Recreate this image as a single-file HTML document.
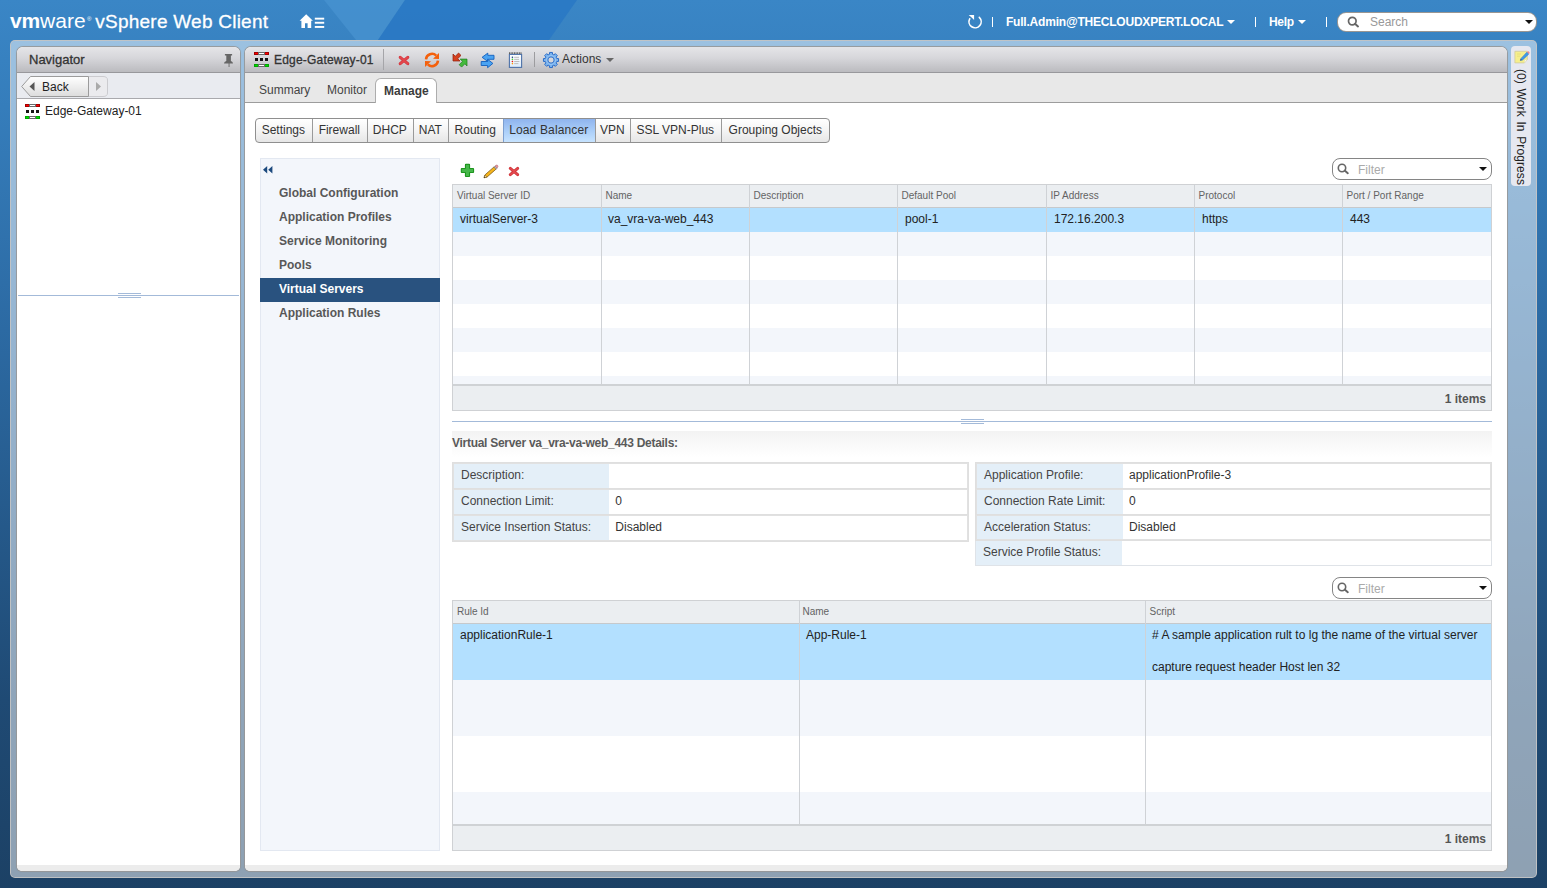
<!DOCTYPE html>
<html lang="en">
<head>
<meta charset="utf-8">
<title>vSphere Web Client</title>
<style>
*{box-sizing:border-box;margin:0;padding:0}
html,body{width:1547px;height:888px;overflow:hidden}
body{position:relative;font-family:"Liberation Sans",Arial,sans-serif;font-size:12px;color:#222;
 background:linear-gradient(180deg,#3a86c6 0px,#3781c0 60px,#2c6aa3 330px,#1f4a74 700px,#1c4165 888px)}
.abs{position:absolute}
.t{position:absolute;white-space:nowrap;line-height:14px}
/* top bar */
#topdeco{left:0;top:0;width:1547px;height:40px}
#brand{left:10px;top:8px;color:#fff;font-size:19px;line-height:26px;height:26px}
#brand .vm{font-size:21px;letter-spacing:.1px}
#brand .vm b{letter-spacing:-.2px}
#brand .reg{font-size:6px;position:relative;top:-7px;margin-left:1px}
#brand .vs{margin-left:4px;letter-spacing:.24px;-webkit-text-stroke:.3px #fff}
.hdrtxt{color:#fff;font-size:12px;font-weight:bold}
/* container */
#wrap{left:10px;top:40px;width:1527px;height:838px;border-radius:5px;background:rgba(255,255,255,.5);border:1px solid rgba(196,196,196,.9)}
.panel{position:absolute;background:#fff;border-radius:6px 6px 5px 5px;overflow:hidden;box-shadow:0 0 0 1px rgba(150,150,150,.85),0 0 2px rgba(90,90,90,.25)}
.phead{position:absolute;left:0;top:0;right:0;height:26px;background:linear-gradient(180deg,#e5e5e8 0%,#d6d6da 45%,#bbbbbf 100%);border-bottom:1px solid #98989c}
.pfoot{position:absolute;left:0;bottom:0;right:0;height:6px;background:#ececec}

/* header right */
.sep{position:absolute;top:17px;width:1px;height:10px;background:#fff}
#search{left:1337px;top:12px;width:200px;height:20px;background:#fff;border:1px solid rgba(120,115,110,.75);border-radius:9px}
.ph{color:#999;font-size:12px}
.caret{position:absolute;width:0;height:0;border-left:4px solid transparent;border-right:4px solid transparent;border-top:4px solid #fff}
/* nav */
#backrow{position:absolute;left:0;top:26px;right:0;height:26px;background:#e9ebf0;border-bottom:1px solid #a9a9ad}

/* main header */
.ttl{font-size:12px;color:#333;-webkit-text-stroke:.3px #333;letter-spacing:.2px}
.vsep{position:absolute;width:1px;background:#a5a5a9}
#tabrow{position:absolute;left:245px;top:73px;width:1262px;height:30px;background:#e8e8e8;border-bottom:1px solid #9c9c9c}
#tabsel{position:absolute;left:375px;top:78px;width:62px;height:25px;background:#fff;border:1px solid #adadad;border-bottom:none;border-radius:6px 6px 0 0}
/* subtabs */
#subtabs{position:absolute;left:255px;top:118px;height:25px;width:575px;border:1px solid #8f8f8f;border-radius:4px;background:linear-gradient(180deg,#fff 0%,#f4f4f4 50%,#e6e6e6 100%);overflow:hidden}
#subtabs div{position:absolute;top:0;height:23px;border-left:1px solid #9a9a9a;line-height:23px;text-align:center;text-indent:-1.4px;color:#333;font-size:12px;white-space:nowrap}
#subtabs div.sel{background:linear-gradient(180deg,#8fb4ee 0%,#a9cdf8 50%,#c6e3ff 100%);border-left:1px solid #7d9fd0;border-right:1px solid #7d9fd0}
/* sidebar */
#side{position:absolute;left:260px;top:158px;width:180px;height:693px;background:#f3f6fb;border:1px solid #e3e8f1}
.sitem{position:absolute;left:279px;font-weight:bold;font-size:12px;color:#585858;line-height:14px;white-space:nowrap}

/* grids */
.grid{position:absolute;left:452px;width:1040px;border:1px solid #cfd1d4;background:#fff;overflow:hidden}
.ghead{position:absolute;left:0;top:0;right:0;height:23px;background:#ebeef1;border-bottom:1px solid #c6c9cc}
.gh{position:absolute;top:5px;font-size:10px;line-height:12px;color:#636363;white-space:nowrap}
.grow{position:absolute;left:0;right:0;margin-top:-1px}
.gsel{background:#b3e0ff}
.galt{background:#f3f6fb}
.gcol{position:absolute;top:0;width:1px;background:#cfd2d6}
.gcolh{position:absolute;top:0;width:1px;height:23px;background:#c6c9cc}
.gfoot{position:absolute;left:0;right:0;bottom:0;height:26px;background:#ebeef1;border-top:2px solid #cfd2d5}
.gfoot span{position:absolute;right:5px;top:6px;font-weight:bold;color:#555;font-size:12px;line-height:14px}
.gc{position:absolute;margin-top:-1px;font-size:12px;line-height:14px;color:#222;white-space:nowrap}
.filter{position:absolute;left:1332px;width:160px;height:22px;background:#fff;border:1px solid #858585;border-radius:8px}
/* details */
#dtitlebg{position:absolute;left:452px;top:431px;width:1040px;height:26px;background:linear-gradient(180deg,#f3f3f3,#fff)}
.dtab{position:absolute;background:#fff;border:1px solid #d6d6d6}
.drow{position:absolute;left:0;right:0;height:27px;border:1px solid #dfdfdf;box-shadow:inset 0 0 0 1px #e1e1e1}
.dlab{position:absolute;left:1px;top:1px;bottom:1px;background:#e4eff8}
.dl,.dv{position:absolute;top:5px;font-size:12px;line-height:14px;color:#444;white-space:nowrap}
.dv{color:#333}
/* wip */
#wip{position:absolute;left:1511px;top:46px;width:20px;height:140px;background:#e6e8f0;border-radius:4px}
#wiptxt{position:absolute;left:1521px;top:69px;width:0;height:0}
#wiptxt span{position:absolute;left:0;top:0;transform-origin:0 0;transform:rotate(90deg) translate(0,-7px);white-space:nowrap;font-size:12px;line-height:14px;color:#222;letter-spacing:.1px;word-spacing:1.2px}
</style>
</head>
<body>
<svg id="topdeco" class="abs" viewBox="0 0 1547 40" preserveAspectRatio="none">
 <polygon points="324,0 405,0 378,40 356,40" fill="#4893d0" opacity=".75"/>
 <polygon points="405,0 577,0 549,40 378,40" fill="#2877c4" opacity=".8"/>
 </svg>
<div id="brand" class="t"><span class="vm"><b>vm</b>ware</span><span class="reg">®</span><span class="vs">vSphere Web Client</span></div>


<!-- home icon -->
<svg class="abs" style="left:299px;top:13px" width="27" height="16" viewBox="0 0 27 16">
 <path d="M7.2 1.2 L0.6 7.8 L2.4 7.8 L2.4 15 L6 15 L6 10.2 L8.6 10.2 L8.6 15 L12.2 15 L12.2 7.8 L13.9 7.8 Z" fill="#fff"/>
 <rect x="15.8" y="4.7" width="9.4" height="1.9" fill="#fff"/><rect x="15.8" y="8.8" width="9.4" height="1.9" fill="#fff"/><rect x="15.8" y="13" width="9.4" height="1.9" fill="#fff"/>
</svg>
<!-- refresh -->
<svg class="abs" style="left:967px;top:13px" width="17" height="17" viewBox="0 0 17 17">
 <path d="M12.3 4.3 A6.1 6.1 0 1 1 2.7 5.8" fill="none" stroke="#fff" stroke-width="1.6" stroke-linecap="round"/>
 <path d="M1.7 2 L7.1 2 L7.1 7 L4.6 4.6 Z" fill="#fff"/>
</svg>
<div class="sep" style="left:992px"></div>
<div class="t hdrtxt" style="left:1006px;top:15px;letter-spacing:-.21px">Full.Admin@THECLOUDXPERT.LOCAL</div>
<div class="caret" style="left:1227px;top:20px"></div>
<div class="sep" style="left:1255px"></div>
<div class="t hdrtxt" style="left:1269px;top:15px;letter-spacing:-.3px">Help</div>
<div class="caret" style="left:1298px;top:20px"></div>
<div class="sep" style="left:1326px"></div>
<div id="search" class="abs">
 <svg class="abs" style="left:9px;top:3px" width="13" height="13" viewBox="0 0 13 13"><circle cx="5.3" cy="5.1" r="3.8" fill="none" stroke="#666" stroke-width="1.7"/><path d="M8 7.8 L11 10.4" stroke="#666" stroke-width="2" stroke-linecap="round"/></svg>
 <div class="t ph" style="left:32px;top:2px">Search</div>
 <div class="caret" style="left:187px;top:7px;border-top-color:#111"></div>
</div>

<div id="wrap" class="abs"></div>

<!-- Navigator -->
<div class="panel" id="nav" style="left:17px;top:47px;width:223px;height:824px">
 <div class="phead"><div class="t" style="left:12px;top:6px;font-size:13px;color:#333;-webkit-text-stroke:.3px #333">Navigator</div>
  <svg class="abs" style="left:206px;top:6px" width="12" height="15" viewBox="0 0 12 15"><path d="M1.9 1 H9.1 V2.5 H7.9 V8 Q10 8.6 10 10.6 H6.5 V14 H5.6 V10.6 H1 Q1 8.6 3.3 8 V2.5 H1.9 Z" fill="#666"/></svg>
 </div>
 <div id="backrow">
  <svg class="abs" style="left:4px;top:3px" width="88" height="21" viewBox="0 0 88 21">
   <defs><linearGradient id="gb" x1="0" y1="0" x2="0" y2="1"><stop offset="0" stop-color="#fff"/><stop offset="1" stop-color="#dcdcdc"/></linearGradient></defs>
   <path d="M67.5 0.5 H82 Q86.5 0.5 86.5 4 V17 Q86.5 20.5 82 20.5 H67.5 Z" fill="#ebebee" stroke="#cbcbcf"/>
   <path d="M9.5 0.5 H67.5 V20.5 H9.5 L0.7 10.5 Z" fill="url(#gb)" stroke="#9b9b9b"/>
   <path d="M13.5 6 V15 L8.5 10.5 Z" fill="#555"/>
   <path d="M75 6 V15 L80 10.5 Z" fill="#aaa"/>
  </svg>
  <div class="t" style="left:25px;top:7px;font-size:12px;color:#222">Back</div>
 </div>
 <svg class="abs gwicon" style="left:8px;top:57px" width="15" height="15" viewBox="0 0 15 15">
  <rect x="0" y="0" width="15" height="3" fill="#a00000"/><rect x="1" y="1" width="13" height="1" fill="#ff0000"/><rect x="4" y="0" width="7" height="3" fill="#6a6a6a"/><rect x="5" y="1" width="5" height="1" fill="#fff"/>
  <rect x="1" y="6" width="3" height="3" fill="#151515"/><rect x="6" y="6" width="3" height="3" fill="#151515"/><rect x="11" y="6" width="3" height="3" fill="#151515"/>
  <rect x="0" y="12" width="15" height="3" fill="#00a400"/><rect x="1" y="13" width="13" height="1" fill="#00dd00"/><rect x="4" y="12" width="7" height="3" fill="#6a6a6a"/><rect x="5" y="13" width="5" height="1" fill="#fff"/>
 </svg>
 <div class="t" style="left:28px;top:57px">Edge-Gateway-01</div>
 <div class="abs" style="left:1px;top:248px;width:221px;height:1px;background:#a3bad9"></div>
 <div class="abs" style="left:101px;top:246px;width:23px;height:1px;background:#a3bad9"></div>
 <div class="abs" style="left:101px;top:250px;width:23px;height:1px;background:#a3bad9"></div>
 <div class="pfoot"></div>
</div>

<!-- Main -->
<div class="panel" id="main" style="left:245px;top:47px;width:1262px;height:824px">
 <div class="phead"></div>
 <div class="pfoot"></div>
</div>

<!-- main header content -->
<svg class="abs gwicon" style="left:254px;top:52px" width="15" height="15" viewBox="0 0 15 15">
  <rect x="0" y="0" width="15" height="3" fill="#a00000"/><rect x="1" y="1" width="13" height="1" fill="#ff0000"/><rect x="4" y="0" width="7" height="3" fill="#6a6a6a"/><rect x="5" y="1" width="5" height="1" fill="#fff"/>
  <rect x="1" y="6" width="3" height="3" fill="#151515"/><rect x="6" y="6" width="3" height="3" fill="#151515"/><rect x="11" y="6" width="3" height="3" fill="#151515"/>
  <rect x="0" y="12" width="15" height="3" fill="#00a400"/><rect x="1" y="13" width="13" height="1" fill="#00dd00"/><rect x="4" y="12" width="7" height="3" fill="#6a6a6a"/><rect x="5" y="13" width="5" height="1" fill="#fff"/>
 </svg>
<div class="t ttl" style="left:274px;top:53px">Edge-Gateway-01</div>
<div class="vsep" style="left:383px;top:49px;height:21px"></div>
<!-- red x -->
<svg class="abs" style="left:398px;top:55px" width="12" height="11" viewBox="0 0 12 11"><path d="M2.2 2.3 L9.8 8.7 M9.8 2.3 L2.2 8.7" stroke="#d2333b" stroke-width="3" stroke-linecap="round"/><path d="M2.2 2.3 L9.8 8.7 M9.8 2.3 L2.2 8.7" stroke="#e2474d" stroke-width="1.8" stroke-linecap="round"/></svg>
<!-- orange refresh -->
<svg class="abs" style="left:424px;top:52px" width="16" height="16" viewBox="0 0 16 16">
 <path d="M2 7.4 A6 6 0 0 1 12.2 3.6" fill="none" stroke="#f4600c" stroke-width="2.5"/>
 <path d="M15 .9 V7 L9 6.7 Z" fill="#f4600c"/>
 <path d="M14 8.6 A6 6 0 0 1 3.8 12.4" fill="none" stroke="#f4600c" stroke-width="2.5"/>
 <path d="M1 15.1 V9 L7 9.3 Z" fill="#f4600c"/>
</svg>
<!-- red/green arrows -->
<svg class="abs" style="left:452px;top:52px" width="16" height="16" viewBox="0 0 16 16">
 <path d="M1 2 L1 9 L8 9 L5.7 6.7 L9 3.4 L6.6 1 L3.3 4.3 Z" fill="#d6401f" stroke="#8e1e08" stroke-width=".7" stroke-linejoin="round"/>
 <path d="M15 7.1 L8.2 7.1 L10.5 9.4 L7.2 12.7 L9.6 15.1 L12.9 11.8 L15 14 Z" fill="#43ba3c" stroke="#1f7d1b" stroke-width=".7" stroke-linejoin="round"/>
</svg>
<!-- blue arrows -->
<svg class="abs" style="left:480px;top:52px" width="16" height="17" viewBox="0 0 16 17">
 <path d="M2.1 5.3 L7.8 1.1 V3.3 H14 V7.3 H7.8 V9.5 Z" fill="#4aa3f2" stroke="#1460bd" stroke-width=".9" stroke-linejoin="round"/>
 <path d="M12.9 11.4 L7.6 7.3 V9.5 H1.2 V13.5 H7.6 V15.7 Z" fill="#4aa3f2" stroke="#1460bd" stroke-width=".9" stroke-linejoin="round"/>
</svg>
<!-- notepad -->
<svg class="abs" style="left:508px;top:51px" width="15" height="18" viewBox="0 0 15 18">
 <defs><linearGradient id="np" x1="0" y1="0" x2="0" y2="1"><stop offset="0" stop-color="#fff"/><stop offset="1" stop-color="#dcebfa"/></linearGradient></defs>
 <rect x="1.4" y="3.4" width="12.2" height="13" fill="url(#np)" stroke="#4d72a8" stroke-width="1.1"/>
 <path d="M1 2.1 H14" stroke="#555" stroke-width="1.8" stroke-dasharray=".9 .75"/>
 <circle cx="4.4" cy="6.3" r=".8" fill="#1c3f7c"/><circle cx="4.4" cy="8.4" r=".8" fill="#5c3"/><circle cx="4.4" cy="10.5" r=".8" fill="#e11"/><circle cx="4.4" cy="12.6" r=".8" fill="#f90"/>
 <path d="M6.2 6.3 H11 M6.2 8.4 H11 M6.2 10.5 H11.4 M6.2 12.6 H10.4" stroke="#bdbdbd" stroke-width="1"/>
</svg>
<div class="vsep" style="left:534px;top:52px;height:15px;background:#9c9c9f"></div>
<!-- gear -->
<svg class="abs" style="left:542px;top:51px" width="18" height="18" viewBox="-9 -9 18 18">
 <path d="M-1.56 -5.69 L-1.44 -7.56 L1.44 -7.56 L1.56 -5.69 L2.92 -5.12 L4.33 -6.37 L6.37 -4.33 L5.12 -2.92 L5.69 -1.56 L7.56 -1.44 L7.56 1.44 L5.69 1.56 L5.12 2.92 L6.37 4.33 L4.33 6.37 L2.92 5.12 L1.56 5.69 L1.44 7.56 L-1.44 7.56 L-1.56 5.69 L-2.92 5.12 L-4.33 6.37 L-6.37 4.33 L-5.12 2.92 L-5.69 1.56 L-7.56 1.44 L-7.56 -1.44 L-5.69 -1.56 L-5.12 -2.92 L-6.37 -4.33 L-4.33 -6.37 L-2.92 -5.12 Z" fill="#7ab3ee" stroke="#2d6dc8" stroke-width="1" stroke-linejoin="round"/>
 <circle r="3.1" fill="#d6d6da" stroke="#2d6dc8" stroke-width=".9"/>
 <circle r="4.6" fill="none" stroke="#a9d0f8" stroke-width=".8" opacity=".7"/>
</svg>
<div class="t" style="left:562px;top:52px;font-size:12px;color:#333">Actions</div>
<div class="caret" style="left:606px;top:58px;border-top-color:#666"></div>

<!-- tab row -->
<div id="tabrow"></div>
<div id="tabsel"></div>
<div class="t" style="left:259px;top:83px;color:#444">Summary</div>
<div class="t" style="left:327px;top:83px;color:#444">Monitor</div>
<div class="t" style="left:384px;top:84px;color:#3c3c3c;font-weight:bold">Manage</div>

<!-- sub tabs -->
<div id="subtabs">
 <div style="left:-1px;width:57px">Settings</div>
 <div style="left:56px;width:55px">Firewall</div>
 <div style="left:111px;width:46px">DHCP</div>
 <div style="left:157px;width:35px">NAT</div>
 <div style="left:192px;width:55px">Routing</div>
 <div class="sel" style="left:247px;width:93px;letter-spacing:.15px">Load Balancer</div>
 <div style="left:339px;width:35px">VPN</div>
 <div style="left:374px;width:91px">SSL VPN-Plus</div>
 <div style="left:465px;width:109px">Grouping Objects</div>
</div>

<!-- sidebar -->
<div id="side"></div>
<svg class="abs" style="left:263px;top:166px" width="10" height="8" viewBox="0 0 10 8"><path d="M4.2 0 V7.4 L0 3.7 Z M9.4 0 V7.4 L5.2 3.7 Z" fill="#1c4a7e"/></svg>
<div class="sitem" style="top:186px">Global Configuration</div>
<div class="sitem" style="top:210px">Application Profiles</div>
<div class="sitem" style="top:234px">Service Monitoring</div>
<div class="sitem" style="top:258px">Pools</div>
<div class="abs" style="left:260px;top:278px;width:180px;height:24px;background:#29527f"></div>
<div class="sitem" style="top:282px;color:#fff">Virtual Servers</div>
<div class="sitem" style="top:306px">Application Rules</div>

<!-- toolbar icons -->
<svg class="abs" style="left:460px;top:163px" width="15" height="15" viewBox="0 0 15 15"><path d="M6 1.9 H9 V6 H13 V9 H9 V13 H6 V9 H1.9 V6 H6 Z" fill="#118c11" stroke="#118c11" stroke-width="2.2" stroke-linejoin="round"/><path d="M6 1.9 H9 V6 H13 V9 H9 V13 H6 V9 H1.9 V6 H6 Z" fill="#46b74a" stroke="#46b74a" stroke-width=".5" stroke-linejoin="round"/></svg>
<svg class="abs" style="left:483px;top:163px" width="16" height="16" viewBox="0 0 16 16">
 <path d="M1.05 14.7 L1.86 11.99 L11.01 3.93 L12.99 6.17 L3.84 14.23 Z" fill="#f6b51c" stroke="#7d5c18" stroke-width=".8" stroke-linejoin="round"/>
 <path d="M1.05 14.7 L1.86 11.99 L3.84 14.23 Z" fill="#fff3cf" stroke="#7d5c18" stroke-width=".6" stroke-linejoin="round"/>
 <path d="M1.05 14.7 L1.4 13.6 L2.15 14.4 Z" fill="#111"/>
 <path d="M11.01 3.93 L12.06 3 L14.04 5.24 L12.99 6.17 Z" fill="#b9bcc2" stroke="#777" stroke-width=".5"/>
 <path d="M12.06 3 L13.1 2.1 Q14.6 1.6 15.1 3.2 L14.04 5.24 Z" fill="#e79aa0" stroke="#a86068" stroke-width=".5"/>
</svg>
<svg class="abs" style="left:508px;top:166px" width="12" height="11" viewBox="0 0 12 11"><path d="M2.3 2.4 L9.7 8.6 M9.7 2.4 L2.3 8.6" stroke="#cc2d33" stroke-width="2.9" stroke-linecap="round"/><path d="M2.3 2.4 L9.7 8.6 M9.7 2.4 L2.3 8.6" stroke="#e2494d" stroke-width="1.7" stroke-linecap="round"/></svg>
<div class="filter" style="top:158px"><svg class="abs" style="left:4px;top:4px" width="13" height="13" viewBox="0 0 13 13"><circle cx="5" cy="5" r="3.7" fill="none" stroke="#666" stroke-width="1.6"/><path d="M7.7 7.6 L10.8 10.2" stroke="#666" stroke-width="2" stroke-linecap="round"/></svg><div class="t ph" style="left:25px;top:4px;color:#aaa">Filter</div><div class="caret" style="left:146px;top:8px;border-top-color:#111"></div></div>
<div class="grid" style="top:184px;height:227px"><div class="ghead"></div><div class="gh" style="left:4px">Virtual Server ID</div><div class="gh" style="left:152.5px">Name</div><div class="gh" style="left:300.5px">Description</div><div class="gh" style="left:448.5px">Default Pool</div><div class="gh" style="left:597.5px">IP Address</div><div class="gh" style="left:745.5px">Protocol</div><div class="gh" style="left:893.5px">Port / Port Range</div><div class="grow gsel" style="top:24px;height:24px"></div><div class="grow galt" style="top:48px;height:24px"></div><div class="grow galt" style="top:96px;height:24px"></div><div class="grow galt" style="top:144px;height:24px"></div><div class="grow galt" style="top:192px;height:8px"></div><div class="gcol" style="left:148px;height:200px"></div><div class="gcol" style="left:296px;height:200px"></div><div class="gcol" style="left:444px;height:200px"></div><div class="gcol" style="left:593px;height:200px"></div><div class="gcol" style="left:741px;height:200px"></div><div class="gcol" style="left:889px;height:200px"></div><div class="gc" style="left:7px;top:28px">virtualServer-3</div><div class="gc" style="left:155px;top:28px">va_vra-va-web_443</div><div class="gc" style="left:452px;top:28px">pool-1</div><div class="gc" style="left:601px;top:28px">172.16.200.3</div><div class="gc" style="left:749px;top:28px">https</div><div class="gc" style="left:897px;top:28px">443</div><div class="gfoot"><span>1 items</span></div></div>
<!-- splitter -->
<div class="abs" style="left:452px;top:421px;width:1040px;height:1px;background:#a3bad9"></div>
<div class="abs" style="left:961px;top:419px;width:23px;height:1px;background:#a3bad9"></div>
<div class="abs" style="left:961px;top:423px;width:23px;height:1px;background:#a3bad9"></div>
<div id="dtitlebg"></div>
<div class="t" style="left:452px;top:436px;font-weight:bold;color:#5a5a5a;letter-spacing:-.28px">Virtual Server va_vra-va-web_443 Details:</div>
<div class="dtab" style="left:452px;top:462px;width:517px;height:80px;border:none">
<div class="drow" style="top:0px;height:28px"><div class="dlab" style="width:155px"></div><div class="dl" style="left:8px">Description:</div><div class="dv" style="left:162.3px"></div></div>
<div class="drow" style="top:26px;height:28px"><div class="dlab" style="width:155px"></div><div class="dl" style="left:8px">Connection Limit:</div><div class="dv" style="left:162.3px">0</div></div>
<div class="drow" style="top:52px;height:28px"><div class="dlab" style="width:155px"></div><div class="dl" style="left:8px">Service Insertion Status:</div><div class="dv" style="left:162.3px">Disabled</div></div>
</div>
<div class="dtab" style="left:975px;top:462px;width:517px;height:80px;border:none">
<div class="drow" style="top:0px;height:28px"><div class="dlab" style="width:146px"></div><div class="dl" style="left:8px">Application Profile:</div><div class="dv" style="left:153px">applicationProfile-3</div></div>
<div class="drow" style="top:26px;height:28px"><div class="dlab" style="width:146px"></div><div class="dl" style="left:8px">Connection Rate Limit:</div><div class="dv" style="left:153px">0</div></div>
<div class="drow" style="top:52px;height:27px"><div class="dlab" style="width:146px"></div><div class="dl" style="left:8px">Acceleration Status:</div><div class="dv" style="left:153px">Disabled</div></div>
</div>
<div class="abs" style="left:975px;top:541px;width:517px;height:25px;border:1px solid #dfe3e8;border-top:none;background:#fff"><div class="abs" style="left:0;top:0;width:146px;height:24px;background:#e4eff8"></div><div class="dl" style="left:7px;top:4px">Service Profile Status:</div></div>
<div class="filter" style="top:577px"><svg class="abs" style="left:4px;top:4px" width="13" height="13" viewBox="0 0 13 13"><circle cx="5" cy="5" r="3.7" fill="none" stroke="#666" stroke-width="1.6"/><path d="M7.7 7.6 L10.8 10.2" stroke="#666" stroke-width="2" stroke-linecap="round"/></svg><div class="t ph" style="left:25px;top:4px;color:#aaa">Filter</div><div class="caret" style="left:146px;top:8px;border-top-color:#111"></div></div>
<div class="grid" style="top:600px;height:251px"><div class="ghead"></div><div class="gh" style="left:4px">Rule Id</div><div class="gh" style="left:349.5px">Name</div><div class="gh" style="left:696.5px">Script</div><div class="grow gsel" style="top:24px;height:56px"></div><div class="grow galt" style="top:80px;height:56px"></div><div class="grow galt" style="top:192px;height:33px"></div><div class="gcol" style="left:346px;height:225px"></div><div class="gcol" style="left:692px;height:225px"></div><div class="gc" style="left:7px;top:28px">applicationRule-1</div><div class="gc" style="left:353px;top:28px">App-Rule-1</div><div class="gc" style="left:699px;top:28px;letter-spacing:.02px"># A sample application rult to lg the name of the virtual server</div><div class="gc" style="left:699px;top:60px">capture request header Host len 32</div><div class="gfoot"><span>1 items</span></div></div>
<!-- work in progress -->
<div id="wip"></div>
<svg class="abs" style="left:1514px;top:50px" width="16" height="15" viewBox="0 0 16 15"><path d="M.9 1.3 H13.3 V9.6 L10.4 12.9 H.9 Z" fill="#f6ef8c" stroke="#cfc9a0" stroke-width=".8"/><path d="M10.4 12.9 L10.6 9.9 L13.3 9.6 Z" fill="#fffef2" stroke="#d9d4b0" stroke-width=".4"/><path d="M3 4 H7 M3 6.2 H6" stroke="#e3dc7a" stroke-width=".8"/><path d="M6.3 10.5 L7 8.4 L13 2.1 L14.9 3.9 L8.6 10 Z" fill="#3e9be9" stroke="#2a6fc0" stroke-width=".5"/><path d="M6.3 10.5 L6.8 9 L7.9 10 Z" fill="#444"/><path d="M13 2.1 L13.7 1.4 Q14.8 1 15.4 2 L15.6 3.1 L14.9 3.9 Z" fill="#f08a90"/></svg>
<div id="wiptxt"><span>(0) Work In Progress</span></div>

</body>
</html>
